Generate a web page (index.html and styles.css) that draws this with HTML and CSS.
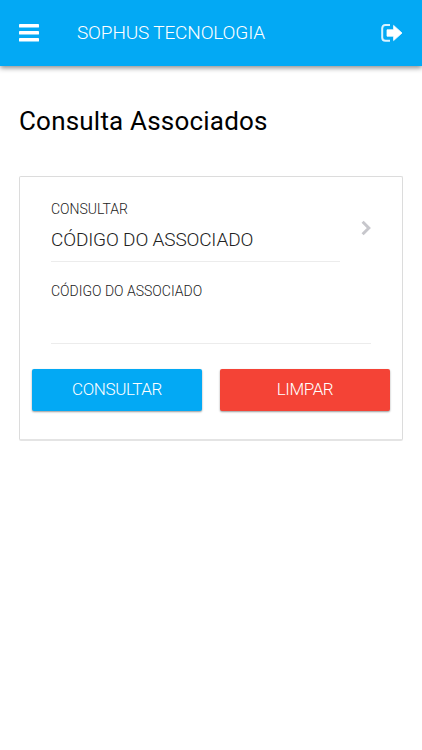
FILE: index.html
```html
<!DOCTYPE html>
<html lang="pt-BR">
<head>
    <meta charset="UTF-8">
    <meta name="viewport" content="width=device-width, initial-scale=1.0">
    <title>Consulta Associados</title>
    <link rel="stylesheet" href="styles.css">
</head>
<body>
    <header class="navbar">
        <button type="button" class="icon-btn" aria-label="Menu">
            <svg width="20" height="18" viewBox="0 0 20 18" fill="#fff">
                <rect width="20" height="3.6" rx="0.7"/>
                <rect y="7" width="20" height="3.6" rx="0.7"/>
                <rect y="14" width="20" height="3.6" rx="0.7"/>
            </svg>
        </button>
        <span class="navbar-title">SOPHUS TECNOLOGIA</span>
        <button type="button" class="icon-btn" aria-label="Sair">
            <svg width="22" height="18" viewBox="0 0 22 18">
                <path d="M9 1.1H4.5Q1.2 1.1 1.2 4.5V13.5Q1.2 16.7 4.5 16.7H9" fill="none" stroke="#d9f3ff" stroke-width="2"/>
                <path d="M6 5.8H12.6V1.4L21 9L12.6 16.6V12.2H6Z" fill="#fff" stroke="#fff" stroke-width="0.8" stroke-linejoin="round"/>
            </svg>
        </button>
    </header>

    <main class="content">
        <h1>Consulta Associados</h1>

        <form class="card">
            <div class="select-row">
                <div class="select-field">
                    <span class="label">CONSULTAR</span>
                    <span class="value">CÓDIGO DO ASSOCIADO</span>
                </div>
                <svg class="chevron" width="10" height="16" viewBox="0 0 10 16">
                    <path d="M1.6 1.8L7.8 8L1.6 14.2" fill="none" stroke="#c7c7cc" stroke-width="3"/>
                </svg>
            </div>

            <div class="form-group">
                <label class="label" for="codigo">CÓDIGO DO ASSOCIADO</label>
                <input type="text" id="codigo">
            </div>

            <div class="buttons">
                <button type="button" class="btn btn-primary">CONSULTAR</button>
                <button type="reset" class="btn btn-danger">LIMPAR</button>
            </div>
        </form>
    </main>
</body>
</html>
```

FILE: styles.css
```css
:root {
    --primary: #03a9f4;
    --danger: #f44336;
    --line: #ececec;
}

* {
    margin: 0;
    padding: 0;
    box-sizing: border-box;
    font-family: Roboto, sans-serif;
}

body {
    background-color: #fff;
    min-height: 100vh;
}

.navbar {
    display: flex;
    align-items: center;
    height: 66px;
    padding: 0 19px;
    background-color: var(--primary);
    box-shadow: 0 2px 5px rgba(0, 0, 0, 0.45);
}

.navbar-title {
    flex: 1;
    margin-left: 38px;
    padding-bottom: 2px;
    color: #fff;
    font-size: 19px;
    font-weight: 300;
    letter-spacing: -0.15px;
}

.icon-btn {
    display: flex;
    background: none;
    border: none;
    cursor: pointer;
}

.content {
    padding: 39px 19px 0;
}

h1 {
    color: #000;
    font-size: 26px;
    font-weight: 400;
    line-height: 32px;
    letter-spacing: 0.2px;
}

.card {
    height: 265px;
    margin-top: 39px;
    padding: 22px 12px 0;
    border: 1px solid #dcdcdc;
    border-bottom: 2px solid #e4e4e4;
    border-radius: 2px;
}

.select-row {
    display: flex;
    padding-left: 19px;
}

.select-field {
    width: 289px;
    height: 63px;
    border-bottom: 1px solid var(--line);
}

.label,
.value {
    display: block;
    color: #222;
    font-weight: 300;
}

.label {
    font-size: 14px;
    line-height: 20px;
}

.value {
    margin-top: 8px;
    font-size: 19px;
    line-height: 26px;
    letter-spacing: -0.16px;
}

.chevron {
    margin: 21px 0 0 21px;
}

.form-group {
    margin: 19px 19px 0;
}

input {
    display: block;
    width: 100%;
    height: 43px;
    border: none;
    border-bottom: 1px solid var(--line);
    background: none;
    font-size: 19px;
    font-weight: 300;
    outline: none;
}

.buttons {
    display: flex;
    gap: 18px;
    margin-top: 25px;
}

.btn {
    flex: 1;
    height: 42px;
    padding-bottom: 2px;
    border: none;
    border-radius: 2px;
    color: #fff;
    font-size: 17px;
    font-weight: 300;
    letter-spacing: -0.4px;
    box-shadow: 0 1px 2px rgba(0, 0, 0, 0.4);
    cursor: pointer;
}

.btn-primary {
    background-color: var(--primary);
}

.btn-danger {
    background-color: var(--danger);
}
```
